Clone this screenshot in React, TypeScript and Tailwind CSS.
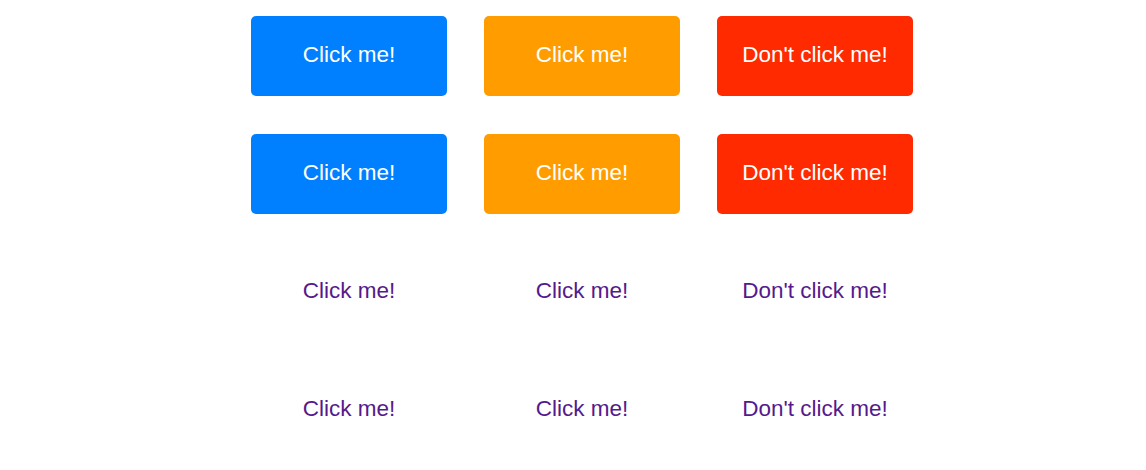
const rows = [
  { filled: true },
  { filled: true },
  { filled: false },
  { filled: false },
];

const buttons = [
  { label: 'Click me!', bg: 'bg-[#0080ff]' },
  { label: 'Click me!', bg: 'bg-[#ff9d00]' },
  { label: "Don't click me!", bg: 'bg-[#ff2a00]' },
];

export default function App() {
  return (
    <div className="min-h-[470px] bg-white pl-[251px] pt-4 font-['Liberation_Sans',Arial,sans-serif]">
      <div className="flex flex-col gap-[38px]">
        {rows.map((row, r) => (
          <div key={r} className="flex gap-[37px]">
            {buttons.map((b, i) => (
              <a
                key={i}
                href="#"
                className={`flex h-20 w-[196px] items-center justify-center rounded-[5px] pb-[3px] text-[22.5px] ${
                  row.filled ? `${b.bg} text-white` : 'text-[#551a8b]'
                }`}
              >
                {b.label}
              </a>
            ))}
          </div>
        ))}
      </div>
    </div>
  );
}
